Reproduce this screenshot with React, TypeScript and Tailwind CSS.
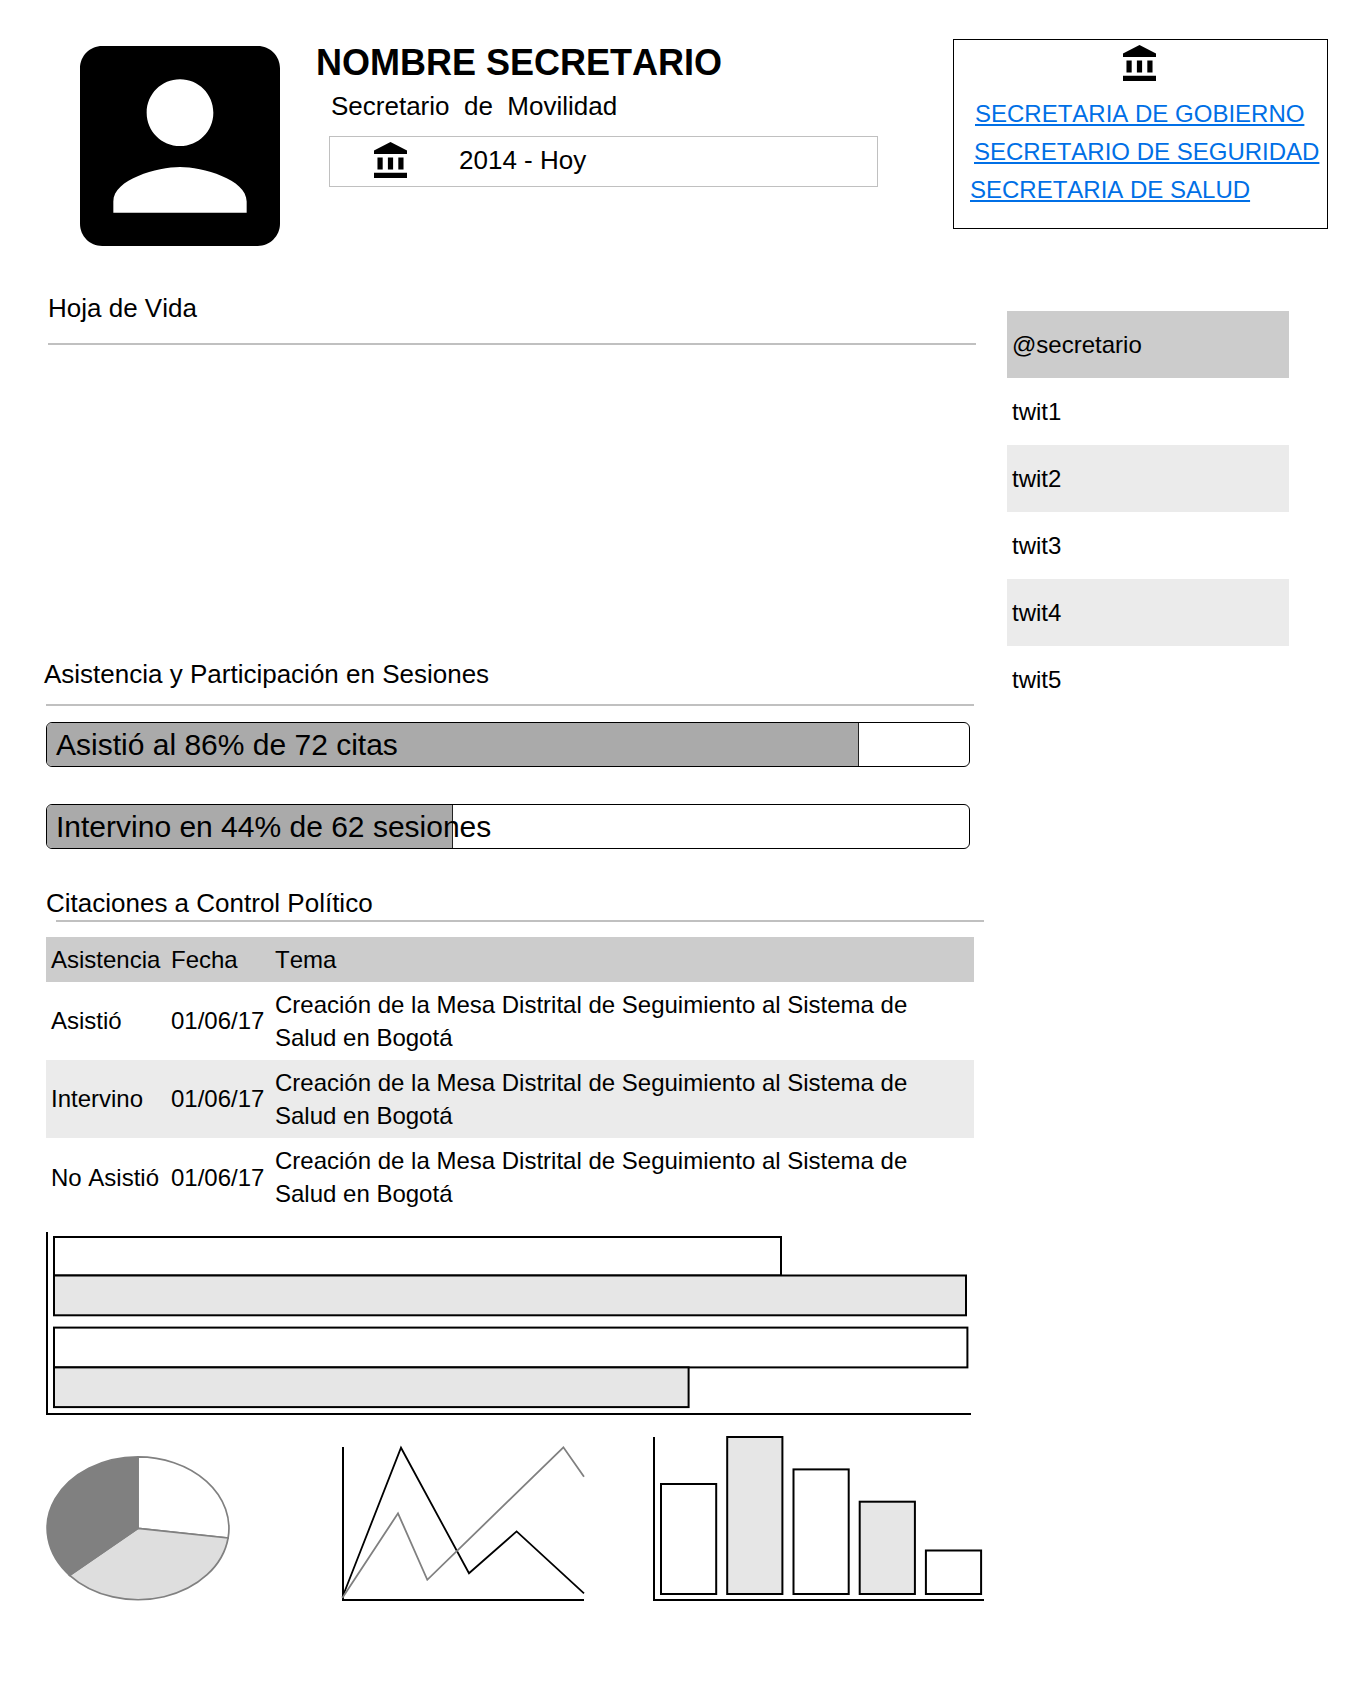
import React from "react";

const links = [
  { label: "SECRETARIA DE GOBIERNO", indent: "ml-[21px]" },
  { label: "SECRETARIO DE SEGURIDAD", indent: "ml-[20px]" },
  { label: "SECRETARIA DE SALUD", indent: "ml-[16px]" },
];

const tweets = ["twit1", "twit2", "twit3", "twit4", "twit5"];

const topic = "Creación de la Mesa Distrital de Seguimiento al Sistema de Salud en Bogotá";
const citations = [
  { status: "Asistió", date: "01/06/17", nudge: "pb-[2px]" },
  { status: "Intervino", date: "01/06/17", nudge: "pb-[2px]" },
  { status: "No Asistió", date: "01/06/17", nudge: "pb-0" },
];

const columns = [
  { x: 8, top: 47.5, gray: false },
  { x: 74.2, top: 0.5, gray: true },
  { x: 140.5, top: 32.9, gray: false },
  { x: 206.7, top: 65.2, gray: true },
  { x: 272.9, top: 114, gray: false },
];

function BankIcon({ className }: { className: string }) {
  return (
    <svg className={`h-[36px] w-[33px] ${className}`} viewBox="2 1 19 21" preserveAspectRatio="none">
      <path d="M4 10v7h3v-7H4zm6 0v7h3v-7h-3zM2 22h19v-3H2v3zm14-12v7h3v-7h-3zm-4.5-9L2 6v2h19V6l-9.5-5z" />
    </svg>
  );
}

function Progress({ label, width }: { label: string; width: number }) {
  return (
    <div className="grid h-[45px] w-[924px] overflow-hidden rounded-[6px] border border-black">
      <div className="col-start-1 row-start-1 border-r border-[#222] bg-[#aaa]" style={{ width }} />
      <div className="z-10 col-start-1 row-start-1 pt-[5px] pl-[9px] text-[30px] leading-[33px]">{label}</div>
    </div>
  );
}

function Header() {
  return (
    <header className="flex items-start">
      <svg className="mt-[46px] ml-[80px] size-[200px] shrink-0" viewBox="3 3 18 18">
        <path d="M3 5v14c0 1.1.89 2 2 2h14c1.1 0 2-.9 2-2V5c0-1.1-.9-2-2-2H5c-1.11 0-2 .9-2 2zm12 4c0 1.66-1.34 3-3 3s-3-1.34-3-3 1.34-3 3-3 3 1.34 3 3zm-9 8c0-2 4-3.1 6-3.1s6 1.1 6 3.1v1H6v-1z" />
      </svg>
      <div className="mt-[42px] ml-[36px] w-[562px] shrink-0">
        <h1 className="text-[36px] leading-[41px] font-bold">NOMBRE SECRETARIO</h1>
        <p className="mt-2 ml-[15px] text-[26px] leading-[30px] whitespace-pre">Secretario  de  Movilidad</p>
        <div className="mt-[15px] ml-[13px] flex h-[51px] w-[549px] items-start border border-[#c0c0c0]">
          <BankIcon className="mt-[5px] ml-[44px]" />
          <span className="mt-2 ml-[52px] text-[26px] leading-[30px]">2014 - Hoy</span>
        </div>
      </div>
      <nav className="mt-[39px] ml-[75px] h-[190px] w-[375px] shrink-0 border border-black pt-[5px]">
        <BankIcon className="ml-[169px]" />
        <ul className="mt-[19px] flex flex-col gap-[11px]">
          {links.map((l) => (
            <li key={l.label} className={`h-[27px] text-[24px] leading-[27px] whitespace-nowrap ${l.indent}`}>
              <a href="#" className="text-[#006fe6] underline decoration-2 underline-offset-2">
                {l.label}
              </a>
            </li>
          ))}
        </ul>
      </nav>
    </header>
  );
}

function CitationTable() {
  return (
    <div className="mt-[15px] ml-[46px] w-[928px] text-[24px] leading-[33px]">
      <div className="grid h-[45px] grid-cols-[120px_104px_1fr] items-center bg-[#ccc] pl-[5px]">
        <span>Asistencia</span>
        <span>Fecha</span>
        <span>Tema</span>
      </div>
      {citations.map((c) => (
        <div
          key={c.status}
          className="grid h-[78px] grid-cols-[120px_104px_1fr] items-center pr-[50px] pl-[5px] odd:bg-[#ebebeb]"
        >
          <span className={c.nudge}>{c.status}</span>
          <span className={c.nudge}>{c.date}</span>
          <span>{topic}</span>
        </div>
      ))}
    </div>
  );
}

function HorizontalBars() {
  return (
    <svg className="mt-[16px] ml-[46px] h-[183px] w-[925px]" viewBox="0 0 925 183" stroke="#000" strokeWidth="2">
      <path d="M1 0V182H925" fill="none" />
      <rect x="8" y="5" width="727" height="38.5" fill="#fff" />
      <rect x="8" y="43.5" width="912" height="39.8" fill="#e6e6e6" />
      <rect x="8" y="95.6" width="913.4" height="39.8" fill="#fff" />
      <rect x="8" y="135.4" width="634.6" height="39.7" fill="#e6e6e6" />
    </svg>
  );
}

function Pie() {
  return (
    <svg className="mt-[20px] h-[145px] w-[184px]" viewBox="0 0 184 145" stroke="#808080" strokeWidth="1.7">
      <path d="M92 72.3V.9A90.9 71.4 0 0 1 182.1 82Z" fill="#fff" />
      <path d="M92 72.3L182.1 82A90.9 71.4 0 0 1 23.6 119.3Z" fill="#dedede" />
      <path d="M92 72.3L23.6 119.3A90.9 71.4 0 0 1 92 .9Z" fill="#808080" />
    </svg>
  );
}

function Lines() {
  return (
    <svg className="mt-[9px] ml-[112px] h-[156px] w-[242px] overflow-visible" viewBox="0 0 242 156" fill="none">
      <path d="M1 2V155H242" stroke="#000" strokeWidth="2" />
      <path d="M.5 152L59 2.7L127 128.3L174.6 86.4L242 148.3" stroke="#000" strokeWidth="1.8" />
      <path d="M.3 153L56 68.3L85.3 134.8L221.4 2.3L242 31.7" stroke="#808080" strokeWidth="1.8" />
    </svg>
  );
}

function Columns() {
  return (
    <svg className="ml-[69px] h-[165px] w-[331px] overflow-visible" viewBox="0 -.5 331 165" stroke="#000" strokeWidth="2">
      <path d="M1 .5V163.5H331" fill="none" />
      {columns.map((c) => (
        <rect key={c.x} x={c.x} y={c.top} width="55.2" height={157.5 - c.top} fill={c.gray ? "#e6e6e6" : "#fff"} />
      ))}
    </svg>
  );
}

export default function App() {
  return (
    <div className="h-[1689px] w-[1366px] overflow-hidden bg-white font-['Liberation_Sans',Arial,sans-serif] text-black [font-kerning:none]">
      <Header />
      <div className="flex items-start">
        <main className="w-[984px] shrink-0 pt-[47px]">
          <h2 className="ml-[48px] text-[26px] leading-[30px]">Hoja de Vida</h2>
          <div className="mt-5 ml-[48px] h-[2px] w-[928px] bg-[#c0c0c0]" />

          <h2 className="mt-[314px] ml-[44px] text-[26px] leading-[30px]">Asistencia y Participación en Sesiones</h2>
          <div className="mt-[15px] ml-[46px] h-[2px] w-[928px] bg-[#c0c0c0]" />
          <div className="mt-4 ml-[46px] flex flex-col gap-[37px]">
            <Progress label="Asistió al 86% de 72 citas" width={812} />
            <Progress label="Intervino en 44% de 62 sesiones" width={406} />
          </div>

          <h2 className="mt-[39px] ml-[46px] text-[26px] leading-[30px]">Citaciones a Control Político</h2>
          <div className="mt-[2px] ml-[56px] h-[2px] w-[928px] bg-[#c0c0c0]" />
          <CitationTable />
          <HorizontalBars />
          <div className="mt-[21px] ml-[46px] flex items-start">
            <Pie />
            <Lines />
            <Columns />
          </div>
        </main>
        <aside className="mt-[65px] ml-[23px] w-[282px] text-[24px]">
          <div className="flex h-[67px] items-center bg-[#ccc] pl-[5px] leading-[27px]">@secretario</div>
          {tweets.map((t) => (
            <div key={t} className="flex h-[67px] items-center pl-[5px] leading-[27px] odd:bg-[#ebebeb]">
              {t}
            </div>
          ))}
        </aside>
      </div>
    </div>
  );
}
